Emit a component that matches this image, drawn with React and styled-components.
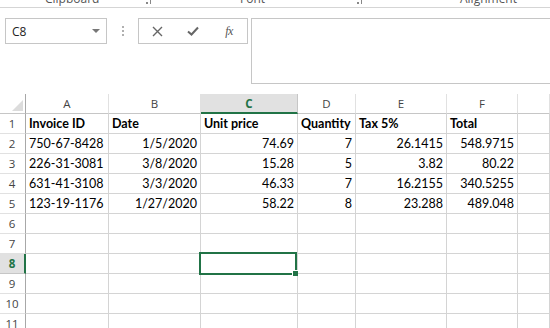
import React from 'react';
import styled, { createGlobalStyle } from 'styled-components';

const GlobalStyle = createGlobalStyle`
  html, body {
    margin: 0;
    padding: 0;
    background: #fff;
    overflow: hidden;
  }
  body {
    font-family: 'Lato', 'Liberation Sans', sans-serif;
  }
`;

const Page = styled.div`
  width: 550px;
  height: 328px;
  overflow: hidden;
  background: #fff;
`;

const RibbonFoot = styled.div`
  height: 7px;
  border-bottom: 1px solid #d5d5d5;
  display: flex;
  align-items: flex-end;
  overflow: hidden;
`;

const Group = styled.div`
  width: ${({ w }) => w}px;
  flex-shrink: 0;
  display: flex;
  align-items: flex-end;
  position: relative;
  height: 7px;
  padding-left: ${({ pad }) => pad}px;
  box-sizing: border-box;
  font-family: 'Open Sans', 'Liberation Sans', sans-serif;
  font-size: 12px;
  color: #555;
  line-height: 12px;
`;

const GroupLabel = styled.span`
  display: block;
  margin-bottom: 2px;
`;

const Launcher = styled.span`
  position: absolute;
  right: ${({ r }) => r}px;
  bottom: 3px;
  width: 6px;
  height: 4px;
  border-right: 1px solid #888;
  &::after {
    content: '';
    position: absolute;
    right: 2px;
    bottom: 0;
    width: 2px;
    height: 2px;
    background: #888;
  }
`;

const FormulaRow = styled.div`
  display: flex;
  align-items: flex-start;
  padding: 10px 0 0 5px;
  height: 66px;
`;

const NameBox = styled.div`
  box-sizing: border-box;
  width: 102px;
  height: 26px;
  border: 1px solid #c6c6c6;
  display: flex;
  align-items: center;
  justify-content: space-between;
  padding: 0 6px 0 6px;
  font-family: 'Open Sans', 'Liberation Sans', sans-serif;
  font-size: 12px;
  color: #222;
`;

const Caret = styled.span`
  width: 0;
  height: 0;
  border-left: 4px solid transparent;
  border-right: 4px solid transparent;
  border-top: 4px solid #777;
`;

const Dots = styled.div`
  width: 31px;
  height: 26px;
  display: flex;
  flex-direction: column;
  align-items: center;
  justify-content: center;
  gap: 2px;
  span {
    width: 2px;
    height: 2px;
    background: #b0b0b0;
  }
`;

const FxBox = styled.div`
  box-sizing: border-box;
  width: 110px;
  height: 26px;
  border: 1px solid #c6c6c6;
  display: flex;
  align-items: center;
  margin-right: 3px;
`;

const FxSlot = styled.span`
  width: 36px;
  display: flex;
  align-items: center;
  justify-content: center;
`;

const FxLabel = styled.span`
  font-family: 'Liberation Serif', serif;
  font-style: italic;
  font-size: 12px;
  color: #555;
  letter-spacing: -0.5px;
`;

const FormulaInput = styled.div`
  flex: 1;
  height: 66px;
  box-sizing: border-box;
  border: 1px solid #c6c6c6;
  border-right: none;
`;

const Sheet = styled.div`
  display: grid;
  grid-template-columns: 26px 83px 92px 97px 58px 91px 71px 1fr;
  grid-auto-rows: 20px;
  margin-top: 10px;
`;

const Cell = styled.div`
  box-sizing: border-box;
  position: relative;
  border-right: 1px solid #d4d4d4;
  border-bottom: 1px solid #d4d4d4;
  font-family: 'Lato', 'Liberation Sans', sans-serif;
  font-size: 12.5px;
  font-weight: ${({ bold }) => (bold ? 700 : 400)};
  color: #000;
  display: flex;
  align-items: center;
  justify-content: ${({ right }) => (right ? 'flex-end' : 'flex-start')};
  padding: 0 3px 0 3px;
  white-space: nowrap;
  overflow: visible;
`;

const ColHead = styled.div`
  box-sizing: border-box;
  position: relative;
  background: ${({ active }) => (active ? '#e1e1e1' : '#fff')};
  border-right: 1px solid ${({ active }) => (active ? '#c6c6c6' : '#e1e1e1')};
  border-bottom: ${({ active }) => (active ? '2px solid #217346' : '1px solid #c6c6c6')};
  display: flex;
  align-items: center;
  justify-content: center;
  font-family: 'Open Sans', 'Liberation Sans', sans-serif;
  font-size: 11.5px;
  font-weight: ${({ active }) => (active ? 700 : 400)};
  color: ${({ active }) => (active ? '#217346' : '#444')};
`;

const Corner = styled.div`
  box-sizing: border-box;
  position: relative;
  border-right: 1px solid #a8a8a8;
  border-bottom: 1px solid #c6c6c6;
  &::after {
    content: '';
    position: absolute;
    right: 2px;
    bottom: 2px;
    width: 0;
    height: 0;
    border-left: 11px solid transparent;
    border-bottom: 11px solid #dcdcdc;
  }
`;

const RowHead = styled.div`
  box-sizing: border-box;
  background: ${({ active }) => (active ? '#e1e1e1' : '#fff')};
  border-right: ${({ active }) => (active ? '2px solid #217346' : '1px solid #a8a8a8')};
  border-bottom: 1px solid ${({ active }) => (active ? '#c6c6c6' : '#e1e1e1')};
  display: flex;
  align-items: center;
  justify-content: center;
  font-family: 'Open Sans', 'Liberation Sans', sans-serif;
  font-size: 11.5px;
  font-weight: ${({ active }) => (active ? 700 : 400)};
  color: ${({ active }) => (active ? '#217346' : '#444')};
  padding-right: ${({ active }) => (active ? 0 : 1)}px;
`;

const Selection = styled.div`
  position: absolute;
  left: -2px;
  top: -2px;
  right: 0;
  bottom: -2px;
  border: 2px solid #217346;
  pointer-events: none;
  z-index: 2;
`;

const FillHandle = styled.div`
  position: absolute;
  right: -3px;
  bottom: -3px;
  width: 5px;
  height: 5px;
  background: #217346;
  border: 1px solid #fff;
  border-right: none;
  border-bottom: none;
`;

const columns = ['A', 'B', 'C', 'D', 'E', 'F', ''];

const rows = [
  [
    { v: 'Invoice ID', bold: true },
    { v: 'Date', bold: true },
    { v: 'Unit price', bold: true },
    { v: 'Quantity', bold: true },
    { v: 'Tax 5%', bold: true },
    { v: 'Total', bold: true },
  ],
  [{ v: '750-67-8428' }, { v: '1/5/2020', r: 1 }, { v: '74.69', r: 1 }, { v: '7', r: 1 }, { v: '26.1415', r: 1 }, { v: '548.9715', r: 1 }],
  [{ v: '226-31-3081' }, { v: '3/8/2020', r: 1 }, { v: '15.28', r: 1 }, { v: '5', r: 1 }, { v: '3.82', r: 1 }, { v: '80.22', r: 1 }],
  [{ v: '631-41-3108' }, { v: '3/3/2020', r: 1 }, { v: '46.33', r: 1 }, { v: '7', r: 1 }, { v: '16.2155', r: 1 }, { v: '340.5255', r: 1 }],
  [{ v: '123-19-1176' }, { v: '1/27/2020', r: 1 }, { v: '58.22', r: 1 }, { v: '8', r: 1 }, { v: '23.288', r: 1 }, { v: '489.048', r: 1 }],
];

const TOTAL_ROWS = 11;
const ACTIVE_ROW = 8;
const ACTIVE_COL = 2;

const App = () => {
  return (
    <Page>
      <GlobalStyle />
      <RibbonFoot>
        <Group w={157} pad={45}>
          <GroupLabel>Clipboard</GroupLabel>
          <Launcher r={6} />
        </Group>
        <Group w={208} pad={83}>
          <GroupLabel>Font</GroupLabel>
          <Launcher r={3} />
        </Group>
        <Group w={185} pad={95}>
          <GroupLabel>Alignment</GroupLabel>
        </Group>
      </RibbonFoot>

      <FormulaRow>
        <NameBox>
          <span>C8</span>
          <Caret />
        </NameBox>
        <Dots>
          <span />
          <span />
          <span />
        </Dots>
        <FxBox>
          <FxSlot>
            <svg width="11" height="11" viewBox="0 0 11 11">
              <path d="M1 1 L10 10 M10 1 L1 10" stroke="#666" strokeWidth="1.4" fill="none" />
            </svg>
          </FxSlot>
          <FxSlot>
            <svg width="12" height="10" viewBox="0 0 12 10">
              <path d="M1 5.5 L4.5 8.5 L11 1.5" stroke="#666" strokeWidth="2" fill="none" />
            </svg>
          </FxSlot>
          <FxSlot>
            <FxLabel>fx</FxLabel>
          </FxSlot>
        </FxBox>
        <FormulaInput />
      </FormulaRow>

      <Sheet>
        <Corner />
        {columns.map((c, i) => (
          <ColHead key={i} active={i === ACTIVE_COL}>
            {c}
          </ColHead>
        ))}

        {Array.from({ length: TOTAL_ROWS }).map((_, ri) => {
          const rowNum = ri + 1;
          const data = rows[ri] || [];
          return (
            <React.Fragment key={rowNum}>
              <RowHead active={rowNum === ACTIVE_ROW}>{rowNum}</RowHead>
              {columns.map((_, ci) => {
                const d = data[ci];
                const selected = rowNum === ACTIVE_ROW && ci === ACTIVE_COL;
                return (
                  <Cell key={ci} bold={d && d.bold} right={d && d.r}>
                    {d ? d.v : ''}
                    {selected && (
                      <Selection>
                        <FillHandle />
                      </Selection>
                    )}
                  </Cell>
                );
              })}
            </React.Fragment>
          );
        })}
      </Sheet>
    </Page>
  );
};

export default App;
